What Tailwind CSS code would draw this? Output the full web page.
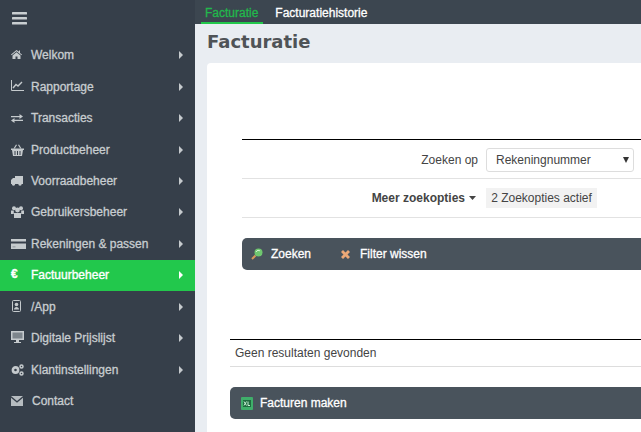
<!DOCTYPE html>
<html lang="nl">
<head>
<meta charset="UTF-8">
<title>Facturatie</title>
<script src="https://cdn.jsdelivr.net/npm/@tailwindcss/browser@4"></script>
</head>
<body class="h-[432px] w-[641px] overflow-hidden bg-[#e9edf2] font-['Liberation_Sans',Arial,sans-serif]">
<div class="flex h-[432px] w-[641px]">

  <!-- sidebar -->
  <aside class="h-full w-[195px] shrink-0 bg-[#363f4a] text-[12px] text-[#c8cdd0] [-webkit-text-stroke:0.3px]">
    <div class="flex h-[39.5px] items-start pl-[12px] pt-[12px]">
      <svg width="15" height="13" viewBox="0 0 15 13" fill="#c9ced1"><rect y="0" width="15" height="2.6" rx=".5"/><rect y="5" width="15" height="2.6" rx=".5"/><rect y="10" width="15" height="2.6" rx=".5"/></svg>
    </div>
    <nav>
      <a class="flex h-[31.45px] items-center pl-[11px] pr-[12px]">
        <span class="flex w-[20px] shrink-0 -translate-y-[1px]"><svg width="11" height="9" viewBox="0 0 11 9" fill="#c5cacd"><path d="M5.500 0 0 4.500l.6.700 4.900-4 4.900 4 .6-.7-2-1.600V.500H8v1.200z"/><path d="M5.500 2.200 1.500 5.500V9h3V6.500h2V9h3V5.500z"/></svg></span>
        <span class="flex-1">Welkom</span>
        <svg width="4" height="8" viewBox="0 0 4 8" fill="#c5cacd"><path d="M0 0l4 4-4 4z"/></svg>
      </a>
      <a class="flex h-[31.45px] items-center pl-[11px] pr-[12px]">
        <span class="flex w-[20px] shrink-0 -translate-y-[1px]"><svg width="13" height="11" viewBox="0 0 13 11" fill="none" stroke="#c5cacd"><path d="M.5 0v10.500H13"/><path d="M2 8l3-3.500 2 1.500 4-4" stroke-width="1.400"/></svg></span>
        <span class="flex-1">Rapportage</span>
        <svg width="4" height="8" viewBox="0 0 4 8" fill="#c5cacd"><path d="M0 0l4 4-4 4z"/></svg>
      </a>
      <a class="flex h-[31.45px] items-center pl-[11px] pr-[12px]">
        <span class="flex w-[20px] shrink-0"><svg width="12" height="9" viewBox="0 0 12 9" fill="#c5cacd"><path d="M0 2h8.500V0L12 2.500 8.500 5V3.200H0z"/><path d="M12 5.800H3.500V4L0 6.500 3.500 9V7H12z"/></svg></span>
        <span class="flex-1">Transacties</span>
        <svg width="4" height="8" viewBox="0 0 4 8" fill="#c5cacd"><path d="M0 0l4 4-4 4z"/></svg>
      </a>
      <a class="flex h-[31.45px] items-center pl-[11px] pr-[12px]">
        <span class="flex w-[20px] shrink-0"><svg width="13" height="12" viewBox="0 0 13 12" fill="#c5cacd"><path d="M0 4.500h13V6H0z"/><path d="M1 6h11l-1 6H2zM3.500 7v4h1V7zM6 7v4h1V7zM8.500 7v4h1V7z" fill-rule="evenodd"/><path d="M2.500 4.500 5 .5l1 .5-2.200 3.500zM10.500 4.500 8 .5 7 1l2.200 3.500z"/></svg></span>
        <span class="flex-1">Productbeheer</span>
        <svg width="4" height="8" viewBox="0 0 4 8" fill="#c5cacd"><path d="M0 0l4 4-4 4z"/></svg>
      </a>
      <a class="flex h-[31.45px] items-center pl-[11px] pr-[12px]">
        <span class="flex w-[20px] shrink-0"><svg width="12" height="10" viewBox="0 0 12 10" fill="#c5cacd"><path d="M4 0h8v8H4zM0 4l2-2h2v6H0z"/><circle cx="2.500" cy="8" r="1.700"/><circle cx="9" cy="8" r="1.700"/></svg></span>
        <span class="flex-1">Voorraadbeheer</span>
        <svg width="4" height="8" viewBox="0 0 4 8" fill="#c5cacd"><path d="M0 0l4 4-4 4z"/></svg>
      </a>
      <a class="flex h-[31.45px] items-center pl-[11px] pr-[12px]">
        <span class="flex w-[20px] shrink-0"><svg width="13" height="12" viewBox="0 0 13 12" fill="#c5cacd"><circle cx="3" cy="2.300" r="2"/><circle cx="10" cy="2.300" r="2"/><circle cx="6.500" cy="4" r="2.400"/><path d="M0 4.500h2.800v3.500H0zM10.200 4.500H13v3.500h-2.800zM3 7h7v5H3z"/></svg></span>
        <span class="flex-1">Gebruikersbeheer</span>
        <svg width="4" height="8" viewBox="0 0 4 8" fill="#c5cacd"><path d="M0 0l4 4-4 4z"/></svg>
      </a>
      <a class="flex h-[31.45px] items-center pl-[11px] pr-[12px]">
        <span class="flex w-[20px] shrink-0"><svg width="15" height="10" viewBox="0 0 15 10" fill="#c5cacd"><path d="M0 0h15v2.500H0zM0 4.500h15V10H0z"/><path d="M1.500 7.500h3v.8h-3z" fill="#7d858c"/></svg></span>
        <span class="flex-1">Rekeningen &amp; passen</span>
        <svg width="4" height="8" viewBox="0 0 4 8" fill="#c5cacd"><path d="M0 0l4 4-4 4z"/></svg>
      </a>
      <a class="flex h-[31.45px] items-center bg-[#22c84c] pl-[11px] pr-[12px] text-white [-webkit-text-stroke:0.35px]">
        <span class="w-[20px] shrink-0 -translate-y-[1px] font-bold">€</span>
        <span class="flex-1">Factuurbeheer</span>
        <svg width="4" height="8" viewBox="0 0 4 8" fill="#fff"><path d="M0 0l4 4-4 4z"/></svg>
      </a>
      <a class="flex h-[31.45px] items-center pl-[11px] pr-[12px]">
        <span class="flex w-[20px] shrink-0 -translate-y-[1px] pl-px"><svg width="9" height="12" viewBox="0 0 9 12"><rect x=".5" y=".5" width="8" height="11" rx="1" fill="none" stroke="#c5cacd"/><circle cx="4.500" cy="4.500" r="1.800" fill="#c5cacd"/><path d="M2 9.500c0-3.500 5-3.500 5 0z" fill="#c5cacd"/></svg></span>
        <span class="flex-1">/App</span>
        <svg width="4" height="8" viewBox="0 0 4 8" fill="#c5cacd"><path d="M0 0l4 4-4 4z"/></svg>
      </a>
      <a class="flex h-[31.45px] items-center pl-[11px] pr-[12px]">
        <span class="flex w-[20px] shrink-0 -translate-y-[1px]"><svg width="13" height="12" viewBox="0 0 13 12"><path d="M0 0h13v9H0zM5 9h3v2h2v1H3v-1h2z" fill="#c5cacd"/><path d="M1.500 1.500h10v6h-10z" fill="#7d858c"/></svg></span>
        <span class="flex-1">Digitale Prijslijst</span>
        <svg width="4" height="8" viewBox="0 0 4 8" fill="#c5cacd"><path d="M0 0l4 4-4 4z"/></svg>
      </a>
      <a class="flex h-[31.45px] items-center pl-[11px] pr-[12px]">
        <span class="flex w-[20px] shrink-0"><svg width="13" height="12" viewBox="0 0 13 12" fill="none" stroke="#c5cacd"><circle cx="4.500" cy="6" r="2.600" stroke-width="2.600"/><circle cx="10.500" cy="2.500" r="1.500" stroke-width="1.500"/><circle cx="10.500" cy="9.500" r="1.500" stroke-width="1.500"/></svg></span>
        <span class="flex-1">Klantinstellingen</span>
        <svg width="4" height="8" viewBox="0 0 4 8" fill="#c5cacd"><path d="M0 0l4 4-4 4z"/></svg>
      </a>
      <a class="flex h-[31.45px] items-center pl-[11px] pr-[12px]">
        <span class="flex w-[21px] shrink-0"><svg width="12" height="10" viewBox="0 0 12 10" fill="#b6bcc0"><path d="M0 0h12L6 5zM0 1.800l6 5 6-5V10H0z"/></svg></span>
        <span class="flex-1">Contact</span>
      </a>
    </nav>
  </aside>

  <!-- content -->
  <div class="min-w-0 flex-1">
    <div class="flex h-[24px] items-start bg-[#3c4650] pl-[6px] text-[12px] [-webkit-text-stroke:0.3px]">
      <span class="h-[24px] border-b-[2px] border-[#22c84c] pl-[4px] pr-[5px] pt-[4px] text-[#22b84c]">Facturatie</span>
      <span class="pl-[12px] pt-[4px] text-white">Facturatiehistorie</span>
    </div>
    <h1 class="h-[39px] pl-[12px] pt-[6px] font-['DejaVu_Sans',sans-serif] text-[18px] leading-[24px] font-bold text-[#4f5357]">Facturatie</h1>
    <div class="ml-[12px] h-[369px] rounded-tl-[4px] bg-white pl-[23px] text-[12px] text-[#444]">
      <div class="pt-[76px] pl-[12px]">
        <div class="flex h-[39px] items-center justify-end border-t border-black pr-[7px] pt-[1px]">
          <span class="mr-[8px]">Zoeken op</span>
          <div class="flex h-[24px] w-[148px] items-center justify-between rounded-[3px] border border-[#ddd] pl-[9px] pr-[4px]">
            <span>Rekeningnummer</span>
            <svg width="6" height="6" viewBox="0 0 6 6" fill="#333"><path d="M0 0h6L3 6z"/></svg>
          </div>
        </div>
        <div class="flex h-[39px] items-center border-t border-[#e2e2e2]">
          <div class="flex w-[244px] items-center justify-end">
            <span class="font-bold">Meer zoekopties</span>
            <svg class="ml-[4px] mr-[10px]" width="7" height="4" viewBox="0 0 7 4" fill="#444"><path d="M0 0h7L3.500 4z"/></svg>
          </div>
          <span class="flex h-[20px] w-[111px] items-center justify-center whitespace-nowrap bg-[#f2f2f2]">2 Zoekopties actief</span>
        </div>
        <div class="h-[21px] border-t border-[#e2e2e2]"></div>
        <div class="flex h-[32px] items-center rounded-l-[5px] bg-[#49535c] pl-[9px] text-white [-webkit-text-stroke:0.3px]">
          <svg width="12" height="12" viewBox="0 0 12 12"><path d="M1 11 4.500 7.500" stroke="#d99a5b" stroke-width="2"/><circle cx="7.500" cy="4.500" r="4" fill="#6fc76f"/><path d="M5 4c1-2 3-2 4-1" stroke="#d8f5d8" fill="none"/></svg>
          <span class="ml-[8px]">Zoeken</span>
          <svg class="ml-[29px]" width="11" height="11" viewBox="0 0 11 11"><path d="M1 3 3 1l2.500 2.500L8 1l2 2-2.500 2.500L10 8l-2 2-2.500-2.500L3 10 1 8l2.500-2.500z" fill="#eba877"/></svg>
          <span class="ml-[9px]">Filter wissen</span>
        </div>
      </div>
      <div class="mt-[69px] flex h-[28px] items-center border-y border-t-black border-b-[#ddd] pl-[5px]">Geen resultaten gevonden</div>
      <div class="mt-[20px] flex h-[32px] items-center rounded-l-[5px] bg-[#49535c] pl-[11px] text-white [-webkit-text-stroke:0.3px]">
        <svg width="12" height="13" viewBox="0 0 12 13"><rect width="12" height="13" rx="1" fill="#3fae6a"/><rect x="2" y="3" width="8" height="7" fill="#1f6b3f"/><path d="M3 4.500l2.500 4M5.500 4.500 3 8.500M7 4.500v4h2" stroke="#c8f0d6" stroke-width="1" fill="none"/></svg>
        <span class="ml-[7px]">Facturen maken</span>
      </div>
    </div>
  </div>
</div>
</body>
</html>
